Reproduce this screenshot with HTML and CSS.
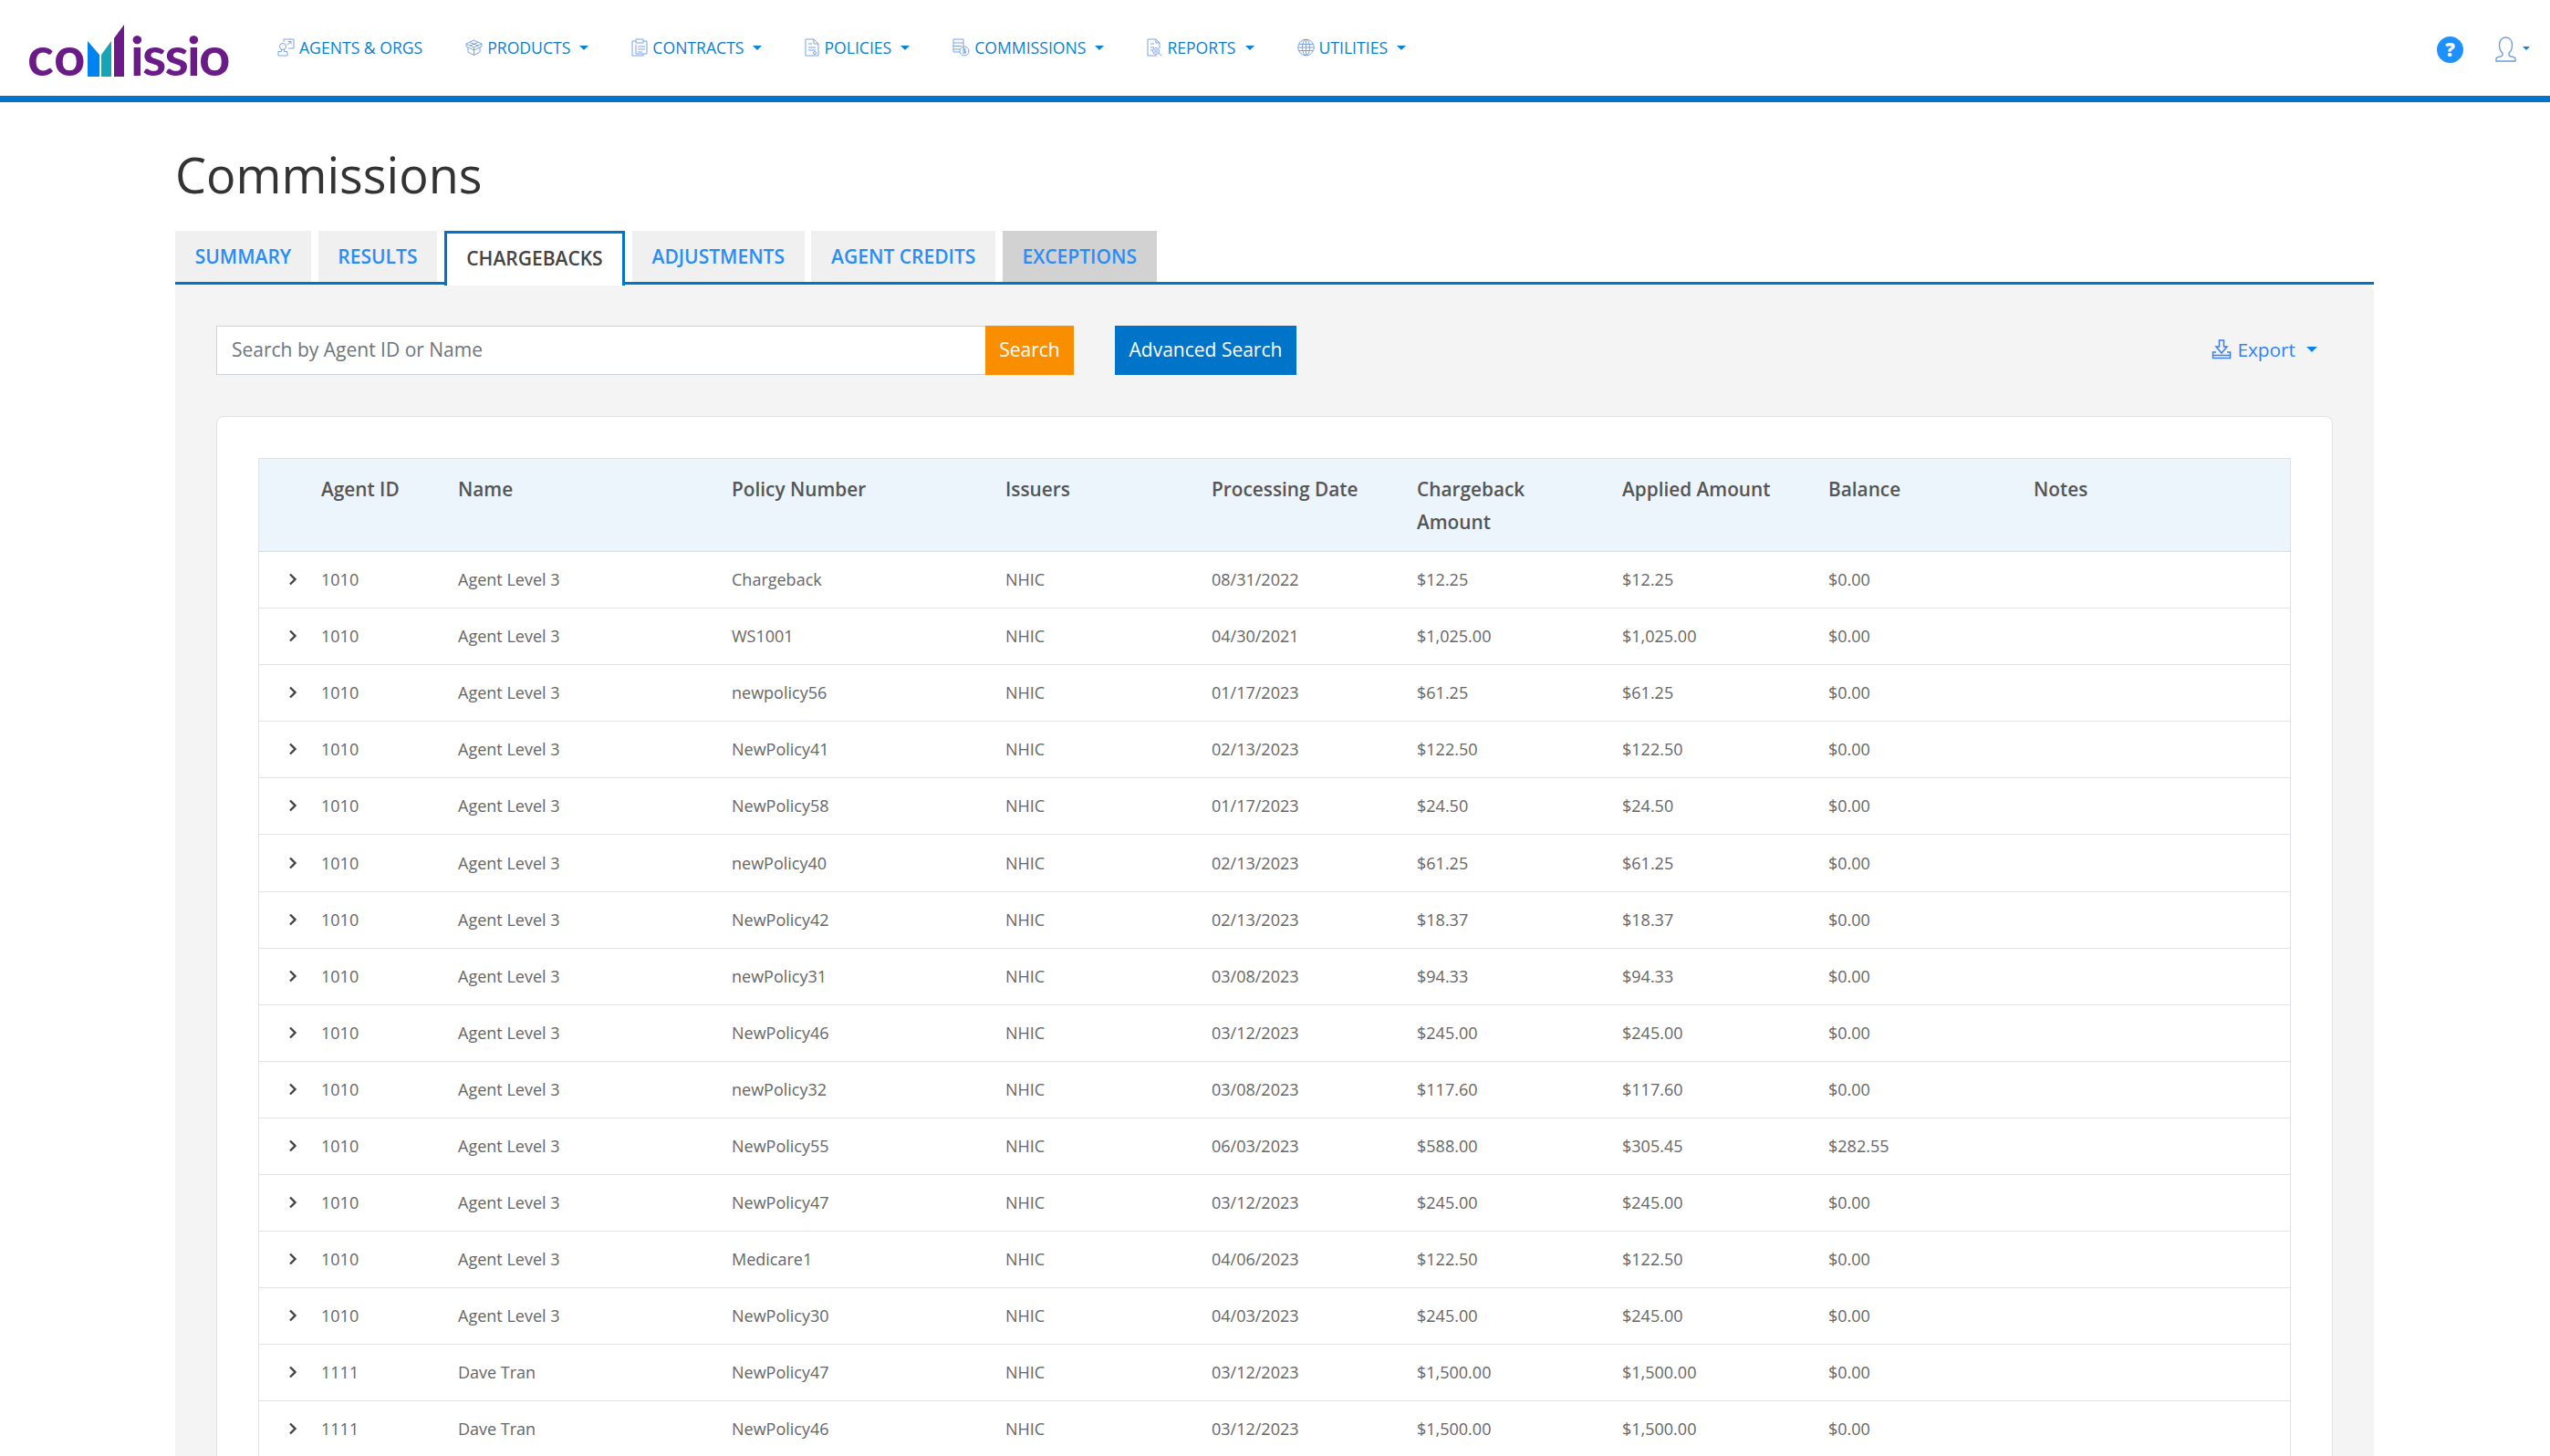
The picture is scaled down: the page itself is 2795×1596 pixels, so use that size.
FILE: index.html
```html
<!DOCTYPE html>
<html lang="en">
<head>
<meta charset="utf-8">
<title>Commissions</title>
<link rel="stylesheet" href="styles.css">
</head>
<body>
<svg class="defs" width="0" height="0" aria-hidden="true">
  <symbol id="chev" viewBox="0 0 10 14"><path d="M2 1.500 7.500 7 2 12.500" fill="none" stroke="#444" stroke-width="2.400"/></symbol>
</svg>
<header class="topbar">
  <a class="logo">
    <span class="logo-text">co</span>
    <svg class="logo-bars" width="42" height="58" viewBox="0 0 42 58">
      <polygon points="1,18 14,33 14,57 1,57" fill="#0082f0"/>
      <polygon points="16,33 27,18 27,57 16,57" fill="#17a5b5"/>
      <polygon points="30,15 41,0 41,57 30,57" fill="#6a1b87"/>
    </svg>
    <span class="logo-text logo-end">issio</span>
  </a>
  <nav class="nav">
    <a class="nav-item">
      <svg class="ico" width="19" height="20" viewBox="0 0 19 20"><path d="M7 4V1h11v10h-6M11 7l4-3.500M12 3.500h3v3"/><circle cx="6" cy="9" r="3.500"/><path d="M4.500 12v2.500H1V19h10v-4.500H7.500V12"/></svg>
      AGENTS &amp; ORGS
    </a>
    <a class="nav-item">
      <svg class="ico" width="19" height="18" viewBox="0 0 19 18"><path d="M9.500 1 18 5l-8.500 4L1 5zM1 5v3l8.500 4 8.500-4V5M3 9v5l6.500 3.500L16 14V9M9.500 9v8.500M5 3.500 14 7M14 3.500 5 7"/></svg>
      PRODUCTS<i class="caret"></i>
    </a>
    <a class="nav-item">
      <svg class="ico" width="18" height="20" viewBox="0 0 18 20"><path d="M5 3H1v16h12v-2M5 1h8v4H5zM13 3h4v14H5V7M7 9h8M7 12h8M7 15h5"/></svg>
      CONTRACTS<i class="caret"></i>
    </a>
    <a class="nav-item">
      <svg class="ico" width="16" height="20" viewBox="0 0 16 20"><path d="M1 1h9l5 5v13H1zM10 1v5h5M4 6h4M4 10h8M4 13h8"/><circle cx="11" cy="16" r="1.500"/></svg>
      POLICIES<i class="caret"></i>
    </a>
    <a class="nav-item">
      <svg class="ico" width="19" height="20" viewBox="0 0 19 20"><path d="M1 1h11v11M1 1v14h7M1 5h11M1 8.500h9M1 12h7"/><circle cx="13" cy="14" r="5"/><path d="M15 12h-3v2h2.500v2H11M13 11v6"/></svg>
      COMMISSIONS<i class="caret"></i>
    </a>
    <a class="nav-item">
      <svg class="ico" width="17" height="20" viewBox="0 0 17 20"><path d="M1 1h9l4 4v6M10 1v4h4M1 1v18h10M4 6h4M4 10h4M4 13h2"/><circle cx="10" cy="14" r="3.500"/><path d="m13 16.500 3 2.500M8 13h4M8 15h4"/></svg>
      REPORTS<i class="caret"></i>
    </a>
    <a class="nav-item">
      <svg class="ico" width="19" height="20" viewBox="0 0 19 20"><circle cx="9.500" cy="10" r="8.800"/><ellipse cx="9.500" cy="10" rx="4" ry="8.800"/><path d="M9.500 1v18M1.500 6.500h16M1.500 13.500h16M1 10h17"/></svg>
      UTILITIES<i class="caret"></i>
    </a>
  </nav>
  <div class="top-right">
    <span class="help">?</span>
    <a class="user">
      <svg width="23" height="28" viewBox="0 0 23 28"><path d="M8 18.500c-2.500-2.500-3.500-6-3.500-9C4.500 4.500 7 1 11.500 1s7 3.500 7 8.500c0 3-1 6.500-3.500 9v2c0 .8 1 1.200 2.500 1.500 2.500.4 4.500.9 4.500 2.500V27H1v-2.500c0-1.600 2-2.100 4.500-2.500C7 21.700 8 21.300 8 20.500z" fill="none" stroke="#6f9be0" stroke-width="1.400"/></svg>
      <i class="caret caret-small"></i>
    </a>
  </div>
</header>

<main class="page">
  <h1 class="title">Commissions</h1>
  <ul class="tabs">
    <li class="tab">SUMMARY</li>
    <li class="tab">RESULTS</li>
    <li class="tab tab-active">CHARGEBACKS</li>
    <li class="tab">ADJUSTMENTS</li>
    <li class="tab">AGENT CREDITS</li>
    <li class="tab tab-muted">EXCEPTIONS</li>
  </ul>
  <section class="panel">
    <div class="toolbar">
      <div class="search">
        <input class="search-input" type="text" placeholder="Search by Agent ID or Name">
        <button class="btn btn-orange">Search</button>
      </div>
      <button class="btn btn-blue">Advanced Search</button>
      <a class="export">
        <svg width="22" height="22" viewBox="0 0 22 22"><path d="M8.500 1h5v7h3.500L11 15 5 8h3.500zM5 14H1.500v6.500h19V14H17M1.500 17.500h19" fill="none" stroke="#3c7ef5" stroke-width="1.500"/></svg>
        Export<i class="caret caret-export"></i>
      </a>
    </div>
    <div class="card">
      <table class="grid">
        <colgroup>
          <col class="c-exp"><col class="c-id"><col class="c-wide"><col class="c-wide"><col class="c-226"><col class="c-225"><col class="c-225"><col class="c-226"><col class="c-225"><col class="c-notes">
        </colgroup>
        <thead>
          <tr><th></th><th>Agent ID</th><th>Name</th><th>Policy Number</th><th>Issuers</th><th>Processing Date</th><th>Chargeback<br>Amount</th><th>Applied Amount</th><th>Balance</th><th>Notes</th></tr>
        </thead>
        <tbody>
          <tr><td><svg class="chev" width="10" height="14"><use href="#chev"/></svg></td><td>1010</td><td>Agent Level 3</td><td>Chargeback</td><td>NHIC</td><td>08/31/2022</td><td>$12.25</td><td>$12.25</td><td>$0.00</td><td></td></tr>
          <tr><td><svg class="chev" width="10" height="14"><use href="#chev"/></svg></td><td>1010</td><td>Agent Level 3</td><td>WS1001</td><td>NHIC</td><td>04/30/2021</td><td>$1,025.00</td><td>$1,025.00</td><td>$0.00</td><td></td></tr>
          <tr><td><svg class="chev" width="10" height="14"><use href="#chev"/></svg></td><td>1010</td><td>Agent Level 3</td><td>newpolicy56</td><td>NHIC</td><td>01/17/2023</td><td>$61.25</td><td>$61.25</td><td>$0.00</td><td></td></tr>
          <tr><td><svg class="chev" width="10" height="14"><use href="#chev"/></svg></td><td>1010</td><td>Agent Level 3</td><td>NewPolicy41</td><td>NHIC</td><td>02/13/2023</td><td>$122.50</td><td>$122.50</td><td>$0.00</td><td></td></tr>
          <tr><td><svg class="chev" width="10" height="14"><use href="#chev"/></svg></td><td>1010</td><td>Agent Level 3</td><td>NewPolicy58</td><td>NHIC</td><td>01/17/2023</td><td>$24.50</td><td>$24.50</td><td>$0.00</td><td></td></tr>
          <tr><td><svg class="chev" width="10" height="14"><use href="#chev"/></svg></td><td>1010</td><td>Agent Level 3</td><td>newPolicy40</td><td>NHIC</td><td>02/13/2023</td><td>$61.25</td><td>$61.25</td><td>$0.00</td><td></td></tr>
          <tr><td><svg class="chev" width="10" height="14"><use href="#chev"/></svg></td><td>1010</td><td>Agent Level 3</td><td>NewPolicy42</td><td>NHIC</td><td>02/13/2023</td><td>$18.37</td><td>$18.37</td><td>$0.00</td><td></td></tr>
          <tr><td><svg class="chev" width="10" height="14"><use href="#chev"/></svg></td><td>1010</td><td>Agent Level 3</td><td>newPolicy31</td><td>NHIC</td><td>03/08/2023</td><td>$94.33</td><td>$94.33</td><td>$0.00</td><td></td></tr>
          <tr><td><svg class="chev" width="10" height="14"><use href="#chev"/></svg></td><td>1010</td><td>Agent Level 3</td><td>NewPolicy46</td><td>NHIC</td><td>03/12/2023</td><td>$245.00</td><td>$245.00</td><td>$0.00</td><td></td></tr>
          <tr><td><svg class="chev" width="10" height="14"><use href="#chev"/></svg></td><td>1010</td><td>Agent Level 3</td><td>newPolicy32</td><td>NHIC</td><td>03/08/2023</td><td>$117.60</td><td>$117.60</td><td>$0.00</td><td></td></tr>
          <tr><td><svg class="chev" width="10" height="14"><use href="#chev"/></svg></td><td>1010</td><td>Agent Level 3</td><td>NewPolicy55</td><td>NHIC</td><td>06/03/2023</td><td>$588.00</td><td>$305.45</td><td>$282.55</td><td></td></tr>
          <tr><td><svg class="chev" width="10" height="14"><use href="#chev"/></svg></td><td>1010</td><td>Agent Level 3</td><td>NewPolicy47</td><td>NHIC</td><td>03/12/2023</td><td>$245.00</td><td>$245.00</td><td>$0.00</td><td></td></tr>
          <tr><td><svg class="chev" width="10" height="14"><use href="#chev"/></svg></td><td>1010</td><td>Agent Level 3</td><td>Medicare1</td><td>NHIC</td><td>04/06/2023</td><td>$122.50</td><td>$122.50</td><td>$0.00</td><td></td></tr>
          <tr><td><svg class="chev" width="10" height="14"><use href="#chev"/></svg></td><td>1010</td><td>Agent Level 3</td><td>NewPolicy30</td><td>NHIC</td><td>04/03/2023</td><td>$245.00</td><td>$245.00</td><td>$0.00</td><td></td></tr>
          <tr><td><svg class="chev" width="10" height="14"><use href="#chev"/></svg></td><td>1111</td><td>Dave Tran</td><td>NewPolicy47</td><td>NHIC</td><td>03/12/2023</td><td>$1,500.00</td><td>$1,500.00</td><td>$0.00</td><td></td></tr>
          <tr><td><svg class="chev" width="10" height="14"><use href="#chev"/></svg></td><td>1111</td><td>Dave Tran</td><td>NewPolicy46</td><td>NHIC</td><td>03/12/2023</td><td>$1,500.00</td><td>$1,500.00</td><td>$0.00</td><td></td></tr>
        </tbody>
      </table>
    </div>
  </section>
</main>
</body>
</html>
```

FILE: styles.css
```css
* { box-sizing: border-box; }
html, body { margin: 0; height: 1596px; overflow: hidden; background: #fff; }
body { font-family: "Open Sans", "Liberation Sans", sans-serif; color: #444; }
.defs { position: absolute; }

.topbar { height: 112px; border-bottom: 7px solid #0074c8; display: flex; align-items: flex-start; padding-left: 30px; background: #fff; }
.logo { display: flex; align-items: flex-start; width: 274px; padding-top: 27px; flex: none; }
.logo-text { font-family: Lato, sans-serif; font-weight: 700; font-size: 60px; line-height: 58px; color: #6a1b87; height: 58px; letter-spacing: .5px; margin-top: 4px; }
.logo-bars { flex: none; margin-left: 1px; }
.logo-end { margin-left: 6px; letter-spacing: -2px; }

.nav { display: flex; gap: 47px; padding-top: 40px; }
.nav-item { display: flex; align-items: center; gap: 5px; font-size: 17.600px; line-height: 24px; color: #0d7fd0; white-space: nowrap; }
.ico { flex: none; fill: none; stroke: #7ba4e4; stroke-width: 1; }
.caret { display: inline-block; width: 0; height: 0; border: 5px solid transparent; border-top: 5.500px solid #0a84d6; border-bottom: 0; margin-left: 5px; }
.caret-small { border-width: 4px; border-top-width: 4px; border-bottom-width: 0; border-top-color: #0a84d6; margin-left: 7px; }

.top-right { margin-left: auto; display: flex; align-items: center; gap: 35px; padding: 38px 22px 0 0; }
.help { width: 29px; height: 29px; border-radius: 50%; background: #1e90ff; color: #fff; font-weight: 800; font-size: 21px; line-height: 29px; text-align: center; margin-top: 2px; }
.user { display: flex; align-items: flex-start; }
.user .caret { margin-top: 11px; }

.page { width: 2410px; margin-left: 192px; }
.title { margin: 0; padding-top: 47px; font-size: 54px; line-height: 64px; font-weight: 400; color: #333; height: 141px; }
.tabs { list-style: none; margin: 0; padding: 0; display: flex; gap: 7.700px; height: 59px; border-bottom: 3px solid #0074c8; }
.tab { height: 56px; padding: 0 21.700px; background: #f0f0f0; color: #2a8df5; font-size: 21px; font-weight: 600; line-height: 56px; white-space: nowrap; }
.tab-muted { background: #d2d2d2; }
.tab-active { height: 60px; background: #fff; color: #444; border: 3px solid #0074c8; border-bottom: 0; line-height: 55px; padding: 0 21.500px; position: relative; z-index: 1; }

.panel { background: #f4f4f4; padding: 45px 45px 0; height: 1284px; border-radius: 0 8px 0 0; }
.toolbar { display: flex; align-items: center; height: 54px; }
.search { display: flex; height: 54px; }
.search-input { width: 843px; height: 54px; border: 1px solid #ced4da; border-right: 0; padding: 0 16px 2px; font: 400 21px "Open Sans", sans-serif; color: #444; background: #fff; outline: 0; border-radius: 0; }
.search-input::placeholder { color: #6c757d; opacity: 1; }
.btn { border: 0; height: 54px; color: #fff; font: 400 21px "Open Sans", sans-serif; padding: 0 0 2px; border-radius: 0; }
.btn-orange { background: #f98f00; width: 97px; }
.btn-blue { background: #0074c8; margin-left: 45px; width: 199px; }
.export { margin-left: auto; margin-right: 17px; padding-bottom: 2px; display: flex; align-items: center; gap: 6px; color: #2d83f5; font-size: 20.800px; }
.caret-export { border-width: 6px; border-top-width: 6px; border-bottom-width: 0; border-top-color: #0a84f0; margin-left: 6px; }

.card { margin-top: 45px; height: 1200px; background: #fff; border: 1px solid #e2e2e2; border-radius: 8px; padding: 45px 45px 0; }
.grid { width: 2228px; table-layout: fixed; border-collapse: separate; border-spacing: 0; border: 1px solid #dfe2e6; border-bottom: 0; }
.c-exp { width: 53px; } .c-id { width: 150px; } .c-wide { width: 300px; } .c-226 { width: 226px; } .c-225 { width: 225px; } .c-notes { width: 296px; }
.grid th { background: #edf5fc; padding: 15px 15px 14px; font-size: 20.800px; line-height: 36px; font-weight: 600; color: #555; text-align: left; vertical-align: top; border-bottom: 1px solid #d8dde2; }
.grid td { height: 62.100px; padding: 0 15px 1px; font-size: 18px; color: #666; border-bottom: 1px solid #e2e2e2; vertical-align: middle; }
.grid td:first-child { padding: 0 0 1px 32px; }
.chev { display: block; }
```
